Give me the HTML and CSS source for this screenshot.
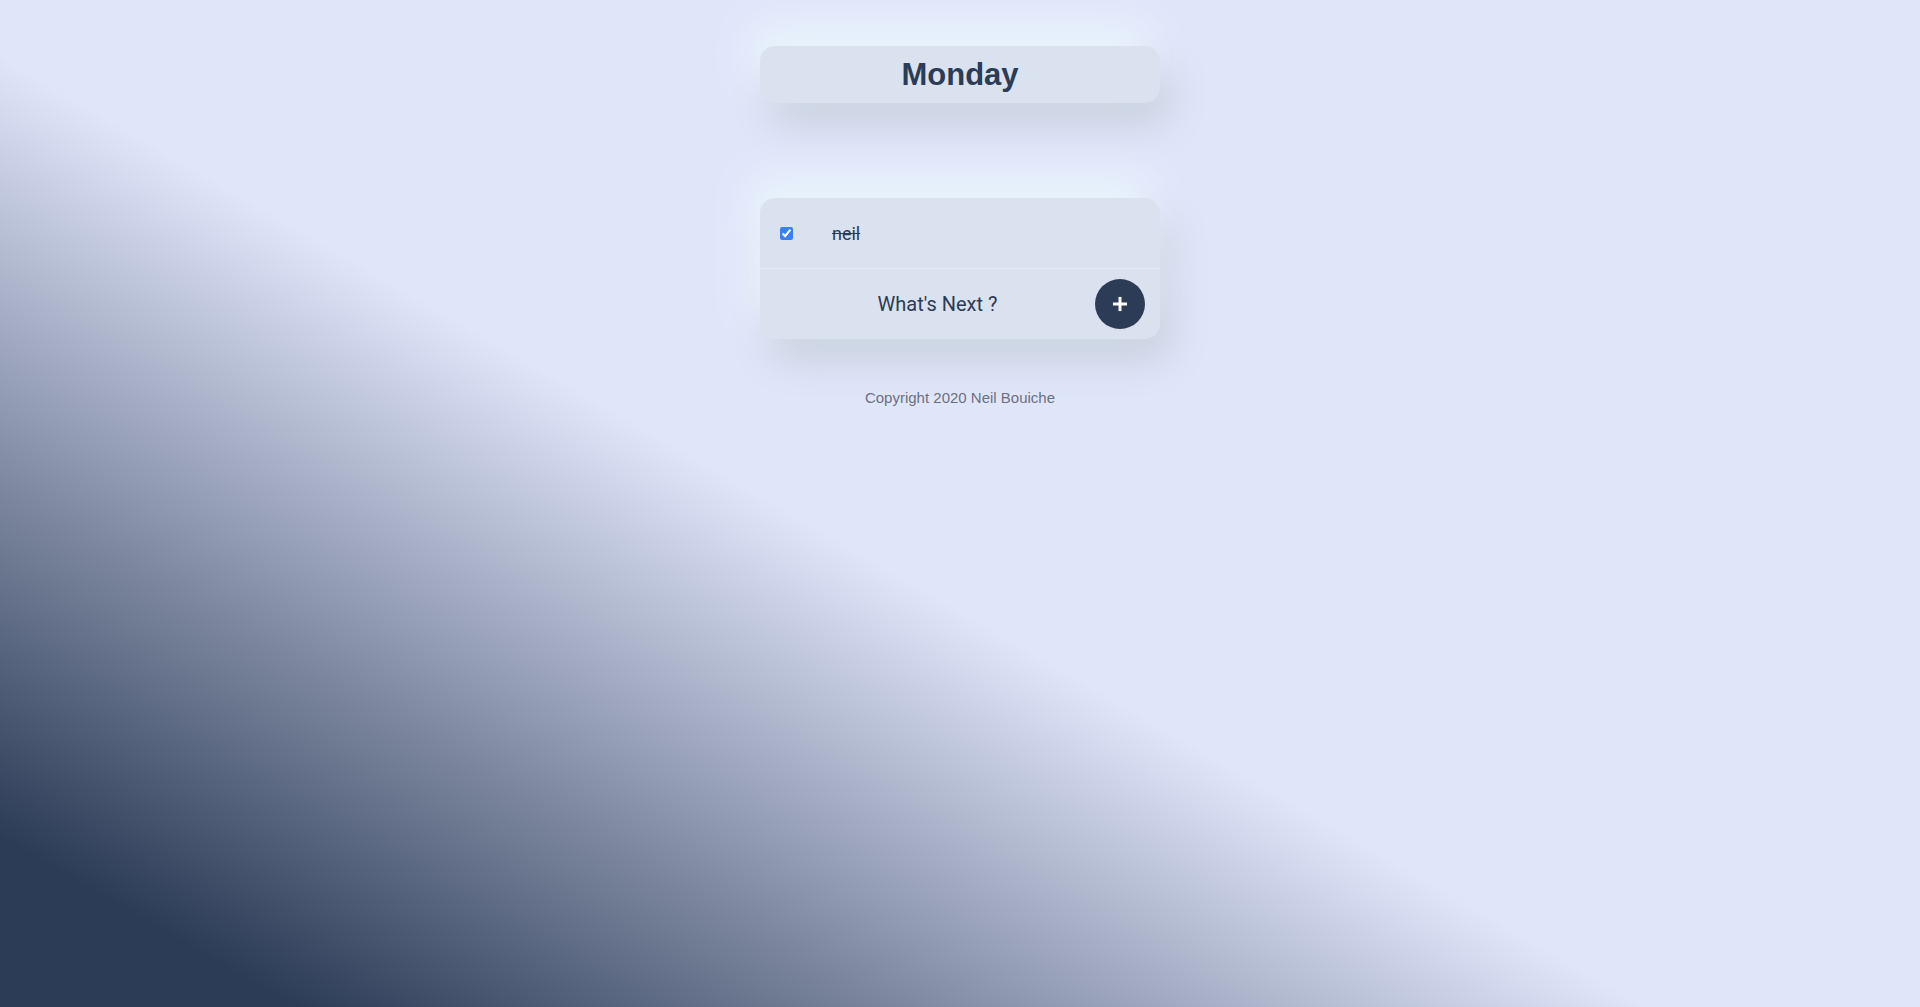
FILE: index.html
```html
<!DOCTYPE html>
<html lang="en">
<head>
<meta charset="utf-8">
<title>Todo</title>
<link rel="stylesheet" href="styles.css">
</head>
<body>
<main class="app">
  <header class="card day-card">
    <h1 class="day-title">Monday</h1>
  </header>
  <section class="card list-card">
    <div class="todo-row">
      <input class="todo-check" type="checkbox" checked>
      <span class="todo-text done">neil</span>
    </div>
    <div class="add-row">
      <div class="add-input">What's Next ?</div>
      <button class="add-btn" type="button" aria-label="Add">
        <svg width="18" height="18" viewBox="0 0 18 18"><path d="M9 2v14M2 9h14" stroke="#fff" stroke-width="3" stroke-linecap="butt" fill="none"/></svg>
      </button>
    </div>
  </section>
  <footer class="copyright">Copyright 2020 Neil Bouiche</footer>
</main>
</body>
</html>
```
FILE: styles.css
```css
html, body {
  margin: 0;
  padding: 0;
}
body {
  min-height: 100vh;
  background: linear-gradient(30deg, #2c3b56 8%, #e0e6fa 45%);
  font-family: "Liberation Sans", Arial, sans-serif;
  color: #2c3b56;
}
.app {
  width: 400px;
  margin: 0 auto;
  padding-top: 46px;
  display: flex;
  flex-direction: column;
}
.card {
  background: #d9e2ee;
  border-radius: 15px;
  box-shadow: -10px -20px 40px #eaf5fd, 10px 20px 40px #c5cedb;
}
.day-card {
  height: 57px;
  display: flex;
  align-items: center;
  justify-content: center;
}
.day-title {
  margin: 0;
  font-family: "Liberation Sans", Arial, sans-serif;
  font-weight: 700;
  font-size: 31px;
  color: #2c3b56;
  line-height: 1;
}
.list-card {
  margin-top: 95px;
  display: flex;
  flex-direction: column;
}
.todo-row {
  height: 70px;
  display: flex;
  align-items: center;
  padding-left: 16px;
  border-bottom: 1px solid #e7edf4;
}
.todo-check {
  width: 13px;
  height: 13px;
  margin: 0 0 0 4px;
  accent-color: #3b7ff5;
}
.todo-text {
  margin-left: 39px;
  font-family: Roboto, "Liberation Sans", sans-serif;
  font-size: 18px;
  color: #2c3b56;
}
.todo-text.done {
  text-decoration: line-through;
}
.add-row {
  height: 70px;
  display: flex;
  align-items: center;
  padding: 0 15px 0 20px;
}
.add-input {
  flex: 1;
  text-align: center;
  font-family: Roboto, "Liberation Sans", sans-serif;
  font-size: 20px;
  color: #2c3b56;
}
.add-btn {
  width: 50px;
  height: 50px;
  border-radius: 50%;
  border: none;
  padding: 0;
  background: #2c3b56;
  display: flex;
  align-items: center;
  justify-content: center;
}
.copyright {
  margin-top: 50px;
  text-align: center;
  font-size: 15px;
  color: #6b7080;
}
```
